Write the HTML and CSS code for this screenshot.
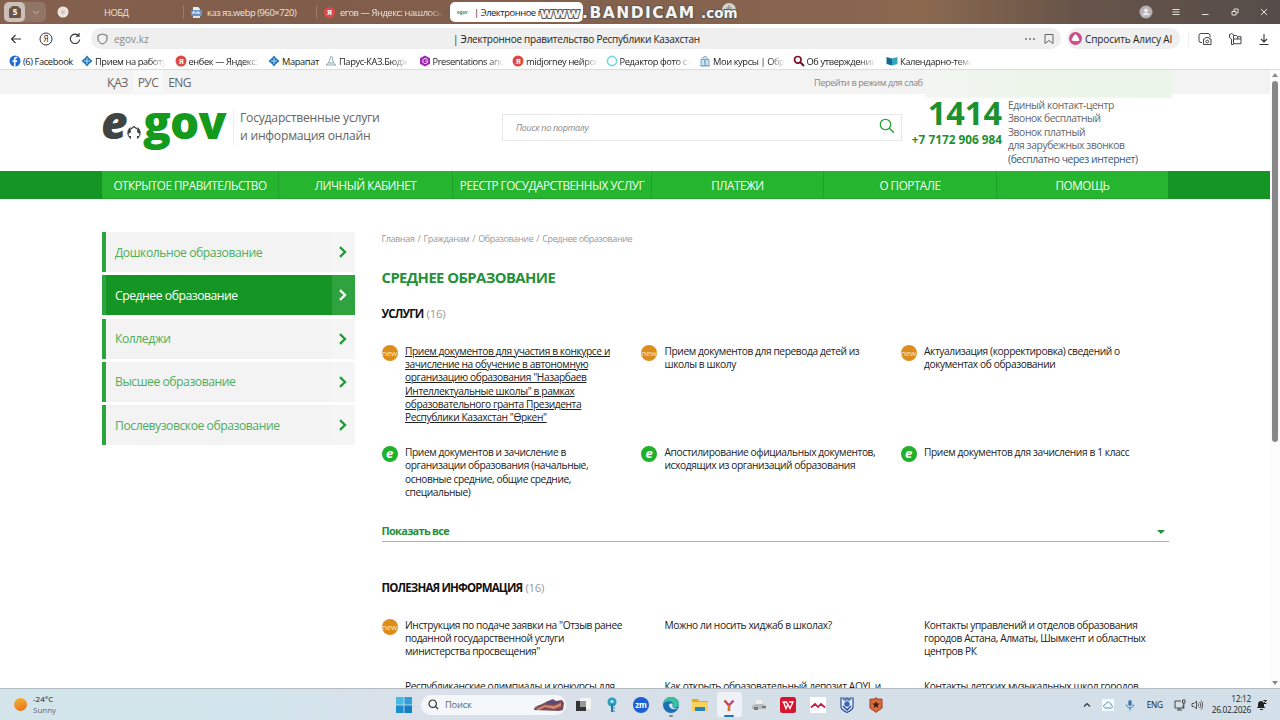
FILE: index.html
```
<!DOCTYPE html>
<html lang="ru">
<head>
  <meta charset="UTF-8" />
  <title>Электронное правительство Республики Казахстан</title>
  <link rel="stylesheet" href="styles.css">
</head>
<body>
  <div class="tabs">
    <div class="tab-group">
      <span class="tab-count"><svg width="12" height="12" viewBox="0 0 12 12"><path d="M3.500 0h5L12 3v7.500a1.500 1.500 0 0 1-1.500 1.500h-9A1.500 1.500 0 0 1 0 10.500V3z" fill="#6b5547"/><text x="6" y="9.300" text-anchor="middle" class="count-text">5</text></svg></span>
      <svg class="tab-chevron" width="8" height="5" viewBox="0 0 8 5"><path d="M1 1l3 2.500L7 1" fill="none" stroke="#c5b5ab"/></svg>
    </div>
    <div class="tab tab-nobd">
      <svg width="12" height="12" viewBox="0 0 12 12"><circle cx="6" cy="6" r="5.500" fill="#f4efe9"/><path d="M6 1.500v9M1.500 6h9M3 3l6 6M9 3L3 9" stroke="#a8917f" stroke-width=".8" stroke-dasharray="1 1"/></svg>
      <span class="tab-text">НОБД</span>
    </div>
    <div class="tab tab-webp">
      <svg width="11" height="11" viewBox="0 0 11 11"><path d="M2 0h5l2 2v2H2z" fill="#e8eef6"/><rect y="3" width="11" height="6" rx="1" fill="#6d93c8"/><path d="M2 7V5h2v1.500M6 7V5h2v2" stroke="#fff" fill="none"/><path d="M2 9h7v2H2z" fill="#dce6f2"/></svg>
      <span class="tab-text">каз яз.webp (960×720)</span>
    </div>
    <div class="tab tab-egov">
      <svg width="11" height="11" viewBox="0 0 11 11"><circle cx="5.500" cy="5.500" r="5.500" fill="#dc4a46"/><text x="5.500" y="8.300" text-anchor="middle" class="ya-text">Я</text></svg>
      <span class="tab-text fade">егов — Яндекс: нашлось 2</span>
    </div>
    <div class="tab tab-active">
      <span class="mini-logo">egov</span>
      <span class="tab-text">| Электронное п</span>
    </div>
    <div class="window-buttons">
      <svg width="14" height="14" viewBox="0 0 14 14"><circle cx="7" cy="7" r="6.500" fill="#b9b2b4"/><circle cx="7" cy="5.300" r="1.900" fill="#eeeaf0"/><path d="M3.500 10.200c0-3.500 7-3.500 7 0z" fill="#eeeaf0"/></svg>
      <svg width="14" height="14" viewBox="0 0 14 14"><path d="M3.500 4.500h7M3.500 7h7M3.500 9.500h7" stroke="#e5e1de" fill="none"/></svg>
      <svg width="14" height="14" viewBox="0 0 14 14"><path d="M4 9.500h6.500" stroke="#e5e1de"/></svg>
      <svg width="14" height="14" viewBox="0 0 14 14"><path d="M4 6.500h4v3.500H4zM6 6V4h4v4H8.500" stroke="#e5e1de" fill="none"/></svg>
      <svg width="14" height="14" viewBox="0 0 14 14"><path d="M4 4l6 6M10 4l-6 6" stroke="#e5e1de"/></svg>
    </div>
    <div class="watermark"><svg class="watermark-ball" width="16" height="16" viewBox="0 0 16 16"><circle cx="8" cy="8" r="7" fill="#d5d3d1"/><path d="M8 3v7M5 6h6" stroke="#888"/></svg><span class="wm-www">www</span><span class="wm-main">.BANDICAM</span><span class="wm-com">.com</span></div>
  </div>

  <div class="toolbar">
    <div class="toolbar-nav">
      <svg width="14" height="14" viewBox="0 0 14 14"><path d="M12 7H2.500M6.500 3L2.500 7l4 4" fill="none" stroke="#333" stroke-width="1.100"/></svg>
      <svg width="14" height="14" viewBox="0 0 14 14"><circle cx="7" cy="7" r="6" fill="none" stroke="#333"/><text x="7" y="10" text-anchor="middle" class="ya-outline">Я</text></svg>
      <svg width="14" height="14" viewBox="0 0 14 14"><path d="M10.800 4A4.700 4.700 0 1 0 11.700 7.500M11 1v3.300H7.800" fill="none" stroke="#333" stroke-width="1.100"/></svg>
    </div>
    <div class="address">
      <svg width="11" height="12" viewBox="0 0 11 12"><path d="M5.500 1L10 2.500V6c0 2.500-2 4.200-4.500 5C3 10.200 1 8.500 1 6V2.500z" fill="none" stroke="#666"/></svg>
      <span class="address-host">egov.kz</span>
      <span class="address-title">| Электронное правительство Республики Казахстан</span>
      <svg width="12" height="12" viewBox="0 0 12 12"><circle cx="2" cy="6" r=".9" fill="#666"/><circle cx="6" cy="6" r=".9" fill="#666"/><circle cx="10" cy="6" r=".9" fill="#666"/></svg>
      <svg class="bookmark-flag" width="10" height="12" viewBox="0 0 10 12"><path d="M1 1.500h8v9L5 7.500l-4 3z" fill="none" stroke="#666"/></svg>
    </div>
    <div class="alice">
      <svg width="13" height="13" viewBox="0 0 13 13"><circle cx="6.500" cy="6.500" r="6.500" fill="#cf4c8b"/><path d="M6.500 2.300c1 0 3.900 4.800 3.900 6s-7.800 1.200-7.800 0 2.900-6 3.900-6z" fill="#fff"/></svg>
      <span>Спросить Алису AI</span>
    </div>
    <div class="toolbar-tools">
      <svg width="14" height="14" viewBox="0 0 14 14"><path d="M4 10.500H3A2 2 0 0 1 1 8.500v-5a2 2 0 0 1 2-2h7a2 2 0 0 1 2 2v2M5.500 7h1l1-1.500h3L11.500 7h1.500v5.500H5.500z" fill="none" stroke="#444"/><circle cx="9.200" cy="9.500" r="1.400" fill="none" stroke="#444"/></svg>
      <svg width="14" height="14" viewBox="0 0 14 14"><path d="M3.500 12.500V7L1.500 5.500v-3l2-1 2 1M5.500 12.500h-2M5.500 7V3.500h3l1 1.200H13v7H5.500zM5.500 7H13M9.500 4.700V7" fill="none" stroke="#444"/></svg>
      <svg width="14" height="14" viewBox="0 0 14 14"><path d="M7 2v8M4 7l3 3 3-3M2.500 12.500h9" fill="none" stroke="#333" stroke-width="1.100"/></svg>
    </div>
  </div>

  <div class="bookmarks">
    <span class="bm"><svg class="bm-icon" viewBox="0 0 12 12"><circle cx="6" cy="6" r="5.500" fill="#1c6ad2"/><path d="M6.500 11.500V7H8l.3-1.700H6.500V4.200c0-.6.300-.9 1.800-.9V1.900C6 1.600 4.900 2.500 4.900 4v1.300H3.500V7h1.400v4.500z" fill="#fff"/></svg><span class="bm-text">(6) Facebook</span></span>
    <span class="bm bm-wide"><svg class="bm-icon" viewBox="0 0 12 12"><path d="M6 .5L8 3l3.500 3L8 9l-2 2.500L4 9 .5 6 4 3z" fill="#1c73b8"/><path d="M6 3v6M3 6h6" stroke="#bfe0f2"/></svg><span class="bm-text fade">Прием на работу</span></span>
    <span class="bm bm-wide"><svg class="bm-icon" viewBox="0 0 12 12"><circle cx="6" cy="6" r="5.500" fill="#dc4a46"/><text x="6" y="8.800" text-anchor="middle" class="ya-text">Я</text></svg><span class="bm-text fade">енбек — Яндекс: н</span></span>
    <span class="bm bm-mid"><svg class="bm-icon" viewBox="0 0 12 12"><path d="M6 .5L8 3l3.500 3L8 9l-2 2.500L4 9 .5 6 4 3z" fill="#1c73b8"/><path d="M6 3v6M3 6h6" stroke="#bfe0f2"/></svg><span class="bm-text">Марапат</span></span>
    <span class="bm bm-wide"><svg class="bm-icon" viewBox="0 0 12 12"><path d="M6 1L3.500 8h5L7 1.500M1 10h10M3.500 8L1 10M8.500 8l2.500 2" fill="none" stroke="#8aa9b8"/></svg><span class="bm-text fade">Парус-КАЗ.Бюдж</span></span>
    <span class="bm bm-wide"><svg class="bm-icon" viewBox="0 0 12 12"><path d="M6 .5l5 2.800v5.500L6 11.500 1 8.800V3.300z" fill="#a127b5"/><path d="M8.500 4.500c-2-2-5-.5-4.700 2 .5 2.500 3.500 2.500 4.700.8V6H6.500" fill="none" stroke="#fff"/></svg><span class="bm-text fade">Presentations and</span></span>
    <span class="bm bm-wide"><svg class="bm-icon" viewBox="0 0 12 12"><circle cx="6" cy="6" r="5.500" fill="#dc4a46"/><text x="6" y="8.800" text-anchor="middle" class="ya-text">Я</text></svg><span class="bm-text fade">midjorney нейрос</span></span>
    <span class="bm bm-wide"><svg class="bm-icon" viewBox="0 0 12 12"><circle cx="6" cy="6" r="4.600" fill="none" stroke="#6edbe2" stroke-width="1.600"/></svg><span class="bm-text fade">Редактор фото с п</span></span>
    <span class="bm bm-wide"><svg class="bm-icon" viewBox="0 0 12 12"><path d="M2.500 4L6 1l3.500 3M2 4.500h8v6H2zM1 11h10" fill="#cfe3ef" stroke="#7aa9c6"/><path d="M6 5v5" stroke="#4c88b0"/></svg><span class="bm-text fade">Мои курсы | Обра</span></span>
    <span class="bm bm-wide"><svg class="bm-icon" viewBox="0 0 12 12"><circle cx="4.800" cy="4.800" r="3.300" fill="none" stroke="#7a1020" stroke-width="1.700"/><path d="M7.300 7.300l3.700 3.700" stroke="#7a1020" stroke-width="2"/></svg><span class="bm-text fade">Об утверждении</span></span>
    <span class="bm bm-wide"><svg class="bm-icon" viewBox="0 0 12 12"><path d="M.5 2L6 3.500v7L.5 9z" fill="#176b93"/><path d="M11.500 2L6 3.500v7L11.500 9z" fill="#36a6c0"/></svg><span class="bm-text fade">Календарно-тема</span></span>
  </div>

  <div class="viewport">
    <div class="page">
      <div class="top-bar">
        <div class="langs"><a>ҚАЗ</a><a class="lang-active">РУС</a><a>ENG</a></div>
        <span class="blind-mode">Перейти в режим для слаб</span>
      </div>

      <div class="header">
        <div class="logo">
          <span class="logo-e">e</span>
          <svg class="logo-dot" width="16" height="16" viewBox="0 0 16 16"><path d="M4.500 2A7 7 0 0 0 5 14V11H2.800V8.500L5 7.300zM11.500 2a7 7 0 0 1-.5 12V11h2.200V8.500L11 7.300z" fill="#3f4543"/><path d="M5 4l3-2.500L11 4" fill="none" stroke="#3f4543" stroke-width="1.300"/></svg>
          <span class="logo-gov">gov</span>
        </div>
        <div class="slogan">Государственные услуги<br>и информация онлайн</div>
        <div class="search">
          <span>Поиск по порталу</span>
          <svg width="16" height="16" viewBox="0 0 16 16"><circle cx="6.500" cy="6.500" r="5.200" fill="none" stroke="#2ca33c" stroke-width="1.300"/><path d="M10.300 10.300l4.700 4.500" stroke="#2ca33c" stroke-width="1.500"/></svg>
        </div>
        <div class="phones">
          <div class="phone-short">1414</div>
          <div class="phone-long">+7 7172 906 984</div>
        </div>
        <div class="phone-notes">Единый контакт-центр<br>Звонок бесплатный<br>Звонок платный<br>для зарубежных звонков<br><a>(бесплатно через интернет)</a></div>
      </div>

      <div class="nav">
        <div class="nav-inner">
          <a>ОТКРЫТОЕ ПРАВИТЕЛЬСТВО</a>
          <a>ЛИЧНЫЙ КАБИНЕТ</a>
          <a>РЕЕСТР ГОСУДАРСТВЕННЫХ УСЛУГ</a>
          <a>ПЛАТЕЖИ</a>
          <a>О ПОРТАЛЕ</a>
          <a>ПОМОЩЬ</a>
        </div>
      </div>

      <div class="content">
        <div class="sidebar">
          <a class="side-item"><span>Дошкольное образование</span><i><svg width="9" height="12" viewBox="0 0 9 12"><path d="M2 1.200L7 6l-5 4.800" /></svg></i></a>
          <a class="side-item side-active"><span>Среднее образование</span><i><svg width="9" height="12" viewBox="0 0 9 12"><path d="M2 1.200L7 6l-5 4.800" /></svg></i></a>
          <a class="side-item"><span>Колледжи</span><i><svg width="9" height="12" viewBox="0 0 9 12"><path d="M2 1.200L7 6l-5 4.800" /></svg></i></a>
          <a class="side-item"><span>Высшее образование</span><i><svg width="9" height="12" viewBox="0 0 9 12"><path d="M2 1.200L7 6l-5 4.800" /></svg></i></a>
          <a class="side-item"><span>Послевузовское образование</span><i><svg width="9" height="12" viewBox="0 0 9 12"><path d="M2 1.200L7 6l-5 4.800" /></svg></i></a>
        </div>

        <div class="main">
          <div class="crumbs">Главная<b>/</b>Гражданам<b>/</b>Образование<b>/</b>Среднее образование</div>
          <h1>СРЕДНЕЕ ОБРАЗОВАНИЕ</h1>
          <h2>УСЛУГИ <span>(16)</span></h2>
          <div class="services">
            <div class="service"><span class="badge-new">new</span><a class="hovered">Прием документов для участия в конкурсе и<br>зачисление на обучение в автономную<br>организацию образования "Назарбаев<br>Интеллектуальные школы" в рамках<br>образовательного гранта Президента<br>Республики Казахстан "Өркен"</a></div>
            <div class="service"><span class="badge-new">new</span><a>Прием документов для перевода детей из<br>школы в школу</a></div>
            <div class="service"><span class="badge-new">new</span><a>Актуализация (корректировка) сведений о<br>документах об образовании</a></div>
            <div class="service"><span class="badge-e">e</span><a>Прием документов и зачисление в<br>организации образования (начальные,<br>основные средние, общие средние,<br>специальные)</a></div>
            <div class="service"><span class="badge-e">e</span><a>Апостилирование официальных документов,<br>исходящих из организаций образования</a></div>
            <div class="service"><span class="badge-e">e</span><a>Прием документов для зачисления в 1 класс</a></div>
          </div>
          <div class="show-all"><span>Показать все</span><i></i></div>
          <h2>ПОЛЕЗНАЯ ИНФОРМАЦИЯ <span>(16)</span></h2>
          <div class="services">
            <div class="service"><span class="badge-new">new</span><a>Инструкция по подаче заявки на "Отзыв ранее<br>поданной государственной услуги<br>министерства просвещения"</a></div>
            <div class="service"><a>Можно ли носить хиджаб в школах?</a></div>
            <div class="service"><a>Контакты управлений и отделов образования<br>городов Астана, Алматы, Шымкент и областных<br>центров РК</a></div>
            <div class="service"><a>Республиканские олимпиады и конкурсы для</a></div>
            <div class="service"><a>Как открыть образовательный депозит AQYL и</a></div>
            <div class="service"><a>Контакты детских музыкальных школ городов</a></div>
          </div>
        </div>
      </div>
    </div>
    <div class="scrollbar"><i class="arrow-up"></i><i class="thumb"></i><i class="arrow-down"></i></div>
    <div class="smudge"></div>
  </div>

  <div class="taskbar">
    <div class="weather">
      <i class="sun"></i>
      <div><div class="temp">-24°C</div><div class="sky">Sunny</div></div>
    </div>
    <svg class="start" width="16" height="16" viewBox="0 0 16 16"><path d="M0 0h7.600v7.600H0z" fill="#48b8e4"/><path d="M8.400 0H16v7.600H8.400z" fill="#2f9fd9"/><path d="M0 8.400h7.600V16H0z" fill="#1e8dce"/><path d="M8.400 8.400H16V16H8.400z" fill="#147dc4"/></svg>
    <div class="task-search">
      <svg width="11" height="11" viewBox="0 0 11 11"><circle cx="4.700" cy="4.700" r="3.700" fill="none" stroke="#333" stroke-width="1.200"/><path d="M7.500 7.500L10 10" stroke="#333" stroke-width="1.200"/></svg>
      <span>Поиск</span>
      <svg width="32" height="14" viewBox="0 0 32 14"><path d="M1 12c0-3 3-4 8-6l6-3 5-2 3 2 6-1 2 3-1 7-4 1z" fill="#7c4a5c"/><path d="M3 11l9-4 9 1 7-3v3l-7 3-9-2-6 3z" fill="#d58a68"/><path d="M14 4l7 1 6-2" fill="none" stroke="#384a8a"/></svg>
    </div>
    <div class="task-icons">
      <span><svg viewBox="0 0 16 16"><path d="M5 1h11v11H5z" fill="#f4f4f4"/><path d="M1 4h4v6h6v4H1z" fill="#333"/><path d="M5 4h6v6H5z" fill="#999"/></svg></span>
      <span><svg viewBox="0 0 16 16"><circle cx="8" cy="5" r="4.500" fill="#2a9dc2"/><path d="M8 7v8" stroke="#1f7fa9" stroke-width="2"/><circle cx="8" cy="4.500" r="1.700" fill="#a5e1ec"/><path d="M8 11h3M8 14h3" stroke="#1f7fa9"/></svg></span>
      <span><svg viewBox="0 0 16 16"><circle cx="8" cy="8" r="8" fill="#1b5fd6"/><text x="8" y="10.600" text-anchor="middle" class="zm-text">zm</text></svg></span>
      <span class="running"><svg viewBox="0 0 16 16"><circle cx="8" cy="8" r="8" fill="#1a6fb5"/><path d="M.3 7C1 2.500 4.500 0 8 0c5 0 8 3.200 8 6.500 0 3-2 4.200-4 4.200-1.700 0-2.700-.7-2.700-1.500 0-.6.600-.9.600-2C9.900 5.400 8 4.300 6 4.300 3.500 4.300 1.300 5.300.3 7z" fill="#3cc0a0"/><path d="M6 8c.5 3.500 3 4.500 6 4.300 1.500-.1 2.500-.6 3.300-1.300-1.500 1-5.500.8-6-1.800.4-1.500.6-2.200-.6-2.700C7.200 6.100 6 6.800 6 8z" fill="#dce9f0"/></svg></span>
      <span><svg viewBox="0 0 16 16"><path d="M0 2h6l1.500 2H16v10H0z" fill="#e2aa2b"/><path d="M0 5h16v9H0z" fill="#f8d15d"/><path d="M3 10h10v4H3z" fill="#2683bd"/></svg></span>
      <span class="task-active"><svg viewBox="0 0 16 16"><path d="M3.500 3.500L8 8.500V14" fill="none" stroke="#d8382f" stroke-width="2.200"/><path d="M12.500 3.500L8 8.500V14" fill="none" stroke="#b5457d" stroke-width="2.200"/><path d="M8 8.500V14" stroke="#e5702c" stroke-width="2.200"/></svg></span>
      <span><svg viewBox="0 0 16 16"><path d="M5 3h6v5H5z" fill="#eee"/><path d="M1 9l3-2h8l3 2v3H1z" fill="#b8babb"/><path d="M3 10h4v3H3zM11 9h4v2h-4z" fill="#76797b"/></svg></span>
      <span><svg viewBox="0 0 16 16"><rect width="16" height="16" rx="2.500" fill="#d6152f"/><path d="M2.500 5h4L8.500 9M3.500 5L6 11.500l2-4 2 4L13 5H9" fill="none" stroke="#fff" stroke-width="1.400"/></svg></span>
      <span><svg viewBox="0 0 16 16"><path d="M0 0h16v16H0z" fill="#fff"/><path d="M1 10.500L5 7l3 3 3-3 4 3.500" fill="none" stroke="#c21d4d" stroke-width="1.700"/></svg></span>
      <span><svg viewBox="0 0 16 16"><path d="M2 1h3v2h2V1h2v2h2V1h3v9c0 2.500-3 4-6 5.500C5 14 2 12.500 2 10z" fill="#e5edfa" stroke="#294e9c" stroke-width="1.200"/><circle cx="8" cy="7" r="2.700" fill="#3b66b3"/><path d="M4 9l4 4 4-4" fill="none" stroke="#294e9c" stroke-width="1.500"/></svg></span>
      <span><svg viewBox="0 0 16 16"><path d="M8 .8l2 1.400h4V11l-6 4.300L2 11V2.200h4z" fill="#df6d35" stroke="#8c3928"/><path d="M8 4l1 2.600h2.800l-2.200 1.700.8 2.700L8 9.400 5.600 11l.8-2.700-2.200-1.700H7z" fill="#3b1c1c"/></svg></span>
    </div>
    <div class="tray">
      <svg width="8" height="6" viewBox="0 0 8 6"><path d="M1 4.500l3-3 3 3" fill="none" stroke="#333" stroke-width="1.200"/></svg>
      <svg class="cloud" width="12" height="12" viewBox="0 0 12 12"><path d="M0 0h12v12H0z" fill="#f5fafc"/><path d="M3.500 9h5.700c2-.4 1.600-2.700 0-2.800C9 2.500 4.500 2.300 3.700 5.300 1 5.400 1 8.800 3.500 9z" fill="none" stroke="#5593b5"/></svg>
      <svg class="mic" width="10" height="12" viewBox="0 0 10 12"><rect x="3.300" y="1" width="3.400" height="6" rx="1.700" fill="#3d78b2"/><path d="M1.500 5.500c0 4.500 7 4.500 7 0M5 9v2.500" fill="none" stroke="#3d78b2"/></svg>
      <span class="tray-lang">ENG</span>
      <svg class="net" width="12" height="12" viewBox="0 0 12 12"><path d="M7 2H1v7h8V6M3 11h5M5 9v2M8.500 1H11v3H8.500zM9.800 4v6" fill="none" stroke="#444"/></svg>
      <svg class="vol" width="12" height="12" viewBox="0 0 12 12"><path d="M1 4.500h2L5.500 2v8L3 7.500H1zM7 4.500c.8 1 .8 2 0 3M8.500 3c1.700 2 1.700 4 0 6M10 1.500c2.300 3 2.300 6 0 9" fill="none" stroke="#444" stroke-width=".9"/></svg>
      <div class="clock">12:12<br>26.02.2026</div>
      <svg class="bell" width="12" height="12" viewBox="0 0 12 12"><path d="M1 9l1-1.500V5c0-4 6-4 6 0v2.500L9.500 9zM4 10h3v1H4z" fill="#222"/><path d="M7.500 1.500h3l-3 3h3" fill="none" stroke="#222"/></svg>
    </div>
  </div>
</body>
</html>
```
FILE: styles.css
```
* {
  box-sizing: border-box;
}
body {
  margin: 0;
  width: 1280px;
  height: 720px;
  overflow: hidden;
  display: flex;
  flex-direction: column;
  font-family: "Open Sans", "Noto Sans", sans-serif;
  background: #fff;
  color: #222;
}
svg {
  display: block;
  flex: none;
}
h1, h2 {
  margin: 0;
}

/* tab strip */
.tabs {
  position: relative;
  display: flex;
  align-items: center;
  height: 24px;
  flex: none;
  padding: 0 9px 0 4px;
  background: linear-gradient(90deg, #84614f 0, #805d4b 25%, #87654f 66%, #8b694f 72%, #675449 84%, #554d4a 100%);
  color: #eee3dc;
  font-size: 9.4px;
  white-space: nowrap;
}
.tab-group {
  display: flex;
  align-items: center;
  width: 42px;
  height: 20px;
  border-radius: 5px;
  background: #917567;
}
.tab-count {
  display: flex;
  justify-content: center;
  align-items: center;
  width: 21px;
  height: 20px;
  border-radius: 5px;
  background: #cbbfb6;
}
.count-text {
  font: bold 8px "Noto Sans", sans-serif;
  fill: #fff;
}
.tab-chevron {
  margin-left: 7px;
}
.tab {
  display: flex;
  align-items: center;
  height: 14px;
}
.tab-text {
  letter-spacing: -0.45px;
}
.tab-nobd {
  width: 138px;
  padding-left: 11px;
  gap: 35px;
  border-right: 1px solid #9b7d6c;
}
.tab-webp {
  width: 133px;
  padding-left: 7px;
  gap: 5px;
  border-right: 1px solid #9b7d6c;
}
.tab-egov {
  width: 133px;
  padding: 0 6px 0 7px;
  gap: 5px;
}
.fade {
  overflow: hidden;
  -webkit-mask-image: linear-gradient(90deg, #000 calc(100% - 16px), transparent);
  mask-image: linear-gradient(90deg, #000 calc(100% - 16px), transparent);
}
.tab-active {
  width: 133px;
  height: 20px;
  padding-left: 7px;
  gap: 6px;
  border-radius: 5px;
  background: #fff;
  color: #222;
}
.mini-logo {
  width: 11px;
  font-size: 4.5px;
  font-weight: bold;
  color: #3f8b62;
}
.ya-text {
  font: bold 7.5px "Noto Sans", sans-serif;
  fill: #fff;
}
.window-buttons {
  display: flex;
  gap: 15.4px;
  margin-left: auto;
}
.watermark {
  position: absolute;
  left: 540px;
  top: 1px;
  display: flex;
  align-items: center;
  height: 24px;
  font-family: "DejaVu Sans", sans-serif;
  font-weight: bold;
  color: #f7f5f3;
  -webkit-text-stroke: 2px #5d5551;
  paint-order: stroke fill;
}
.wm-www {
  width: 42px;
  font-size: 14.5px;
}
.wm-main {
  width: 119px;
  font-size: 15.5px;
  letter-spacing: 1.5px;
}
.wm-com {
  position: relative;
  font-size: 13.5px;
}
.watermark-ball {
  position: absolute;
  right: 0;
  top: 1px;
}

/* address row */
.toolbar {
  display: flex;
  align-items: center;
  height: 29px;
  flex: none;
  padding: 0 9px;
  background: #fff;
}
.toolbar-nav {
  display: flex;
  gap: 15.5px;
  width: 82px;
}
.ya-outline {
  font: 8px "Noto Sans", sans-serif;
  fill: #333;
}
.address {
  display: flex;
  align-items: center;
  width: 970px;
  height: 21px;
  padding: 0 6px;
  border-radius: 10px;
  background: #efefef;
  font-size: 10px;
}
.address-host {
  width: 334px;
  margin-left: 6px;
  color: #888;
}
.address-title {
  flex: 1;
  margin-left: 5px;
  letter-spacing: -0.25px;
}
.bookmark-flag {
  margin: 0 1px 0 8px;
}
.alice {
  display: flex;
  align-items: center;
  gap: 3px;
  width: 113px;
  height: 21px;
  margin-left: 6px;
  padding-left: 2px;
  border-radius: 10px;
  background: #efefef;
  font-size: 10px;
  letter-spacing: -0.1px;
  white-space: nowrap;
}
.toolbar-tools {
  display: flex;
  gap: 15.5px;
  margin-left: auto;
  padding-left: 9px;
  border-left: 1px solid #eee;
}

/* bookmarks */
.bookmarks {
  display: flex;
  align-items: center;
  height: 17px;
  flex: none;
  padding-left: 9px;
  border-bottom: 1px solid #ddd;
  font-size: 9.3px;
  letter-spacing: -0.4px;
  white-space: nowrap;
}
.bm {
  display: flex;
  align-items: center;
  gap: 2px;
  width: 72px;
}
.bm-wide {
  width: 93.5px;
  padding-right: 8px;
}
.bm-mid {
  width: 57px;
}
.bm-icon {
  width: 12px;
  height: 12px;
}

/* web page */
.viewport {
  position: relative;
  display: flex;
  flex: 1;
  min-height: 0;
  overflow: hidden;
}
.page {
  width: 1270px;
}
.smudge {
  position: absolute;
  left: 925px;
  top: -5px;
  width: 247px;
  height: 33px;
  background: linear-gradient(90deg, #f3f5f2 0, #eef5ec 30%, #ebf5e9 100%);
  filter: blur(1px);
}
.top-bar {
  display: flex;
  align-items: center;
  height: 24px;
  padding-left: 102px;
  background: #f3f3f3;
}
.langs {
  display: flex;
  width: 712px;
  font-size: 12px;
  letter-spacing: -0.6px;
  color: #666;
}
.langs a {
  padding: 4px 5px;
}
.langs .lang-active {
  background: #f8f8f8;
}
.blind-mode {
  white-space: nowrap;
  font-size: 9.2px;
  letter-spacing: -0.45px;
  color: #888;
}
.header {
  display: flex;
  height: 77px;
  padding-left: 102px;
}
.logo {
  display: flex;
  width: 131px;
  height: 60px;
  font-weight: 800;
  line-height: 54px;
}
.logo-e {
  width: 25px;
  margin-left: -1px;
  font-size: 46px;
  font-style: italic;
  color: #3f4543;
}
.logo-dot {
  margin: 31px 1px 0 0;
}
.logo-gov {
  font-size: 46px;
  letter-spacing: -0.8px;
  color: #149a1c;
}
.slogan {
  width: 269px;
  height: 36px;
  margin-top: 15px;
  padding-left: 6px;
  border-left: 1px solid #eee;
  font-size: 12.2px;
  line-height: 17.5px;
  letter-spacing: -0.25px;
  color: #666;
}
.search {
  display: flex;
  align-items: center;
  justify-content: space-between;
  width: 400px;
  height: 27px;
  margin-top: 20px;
  padding: 0 6px 0 13px;
  border: 1px solid #e8e8e8;
  font-size: 9px;
  font-style: italic;
  letter-spacing: -0.3px;
  color: #888;
}
.search svg {
  margin-top: -4px;
}
.phones {
  width: 100px;
  text-align: right;
  white-space: nowrap;
  font-weight: bold;
  color: #1c9130;
}
.phone-short {
  height: 37px;
  font-size: 32.5px;
  line-height: 37px;
}
.phone-long {
  font-size: 11.8px;
  line-height: 17px;
}
.phone-notes {
  margin: 5px 0 0 6px;
  font-size: 10.3px;
  line-height: 13.4px;
  letter-spacing: -0.4px;
  color: #666;
  white-space: nowrap;
}
.phone-notes a {
  color: #315a78;
}
.nav {
  height: 28px;
  padding-left: 102px;
  background: #159624;
}
.nav-inner {
  display: grid;
  grid-template-columns: 177px 174px 199px 172px 173px 171px;
  width: 1066px;
  height: 28px;
  background: #25b52f;
  border-bottom: 1px solid #1fa32c;
}
.nav a {
  border-right: 1px solid #1ea32b;
  text-align: center;
  line-height: 28px;
  font-size: 11.7px;
  letter-spacing: -0.45px;
  white-space: nowrap;
  color: #f4fff4;
}
.nav a:last-child {
  border: 0;
}
.content {
  display: flex;
  padding: 33px 0 0 102px;
}
.sidebar {
  display: flex;
  flex-direction: column;
  gap: 3.3px;
  width: 253px;
  margin-right: 26.5px;
}
.side-item {
  display: flex;
  justify-content: space-between;
  align-items: center;
  height: 40px;
  border-left: 4px solid #2ba53e;
  padding-left: 9px;
  background: #f3f3f3;
  color: #4fae5b;
  font-size: 12.2px;
  letter-spacing: -0.47px;
}
.side-item i {
  display: flex;
  align-items: center;
  width: 23px;
  height: 40px;
  padding-left: 6px;
  background: #f5f5f5;
}
.side-item path {
  fill: none;
  stroke: #1f9a35;
  stroke-width: 2.3;
}
.side-active {
  background: #159624;
  color: #fff;
}
.side-active i {
  background: #2fa33d;
}
.side-active path {
  stroke: #fff;
}
.main {
  width: 787px;
  white-space: nowrap;
}
.crumbs {
  height: 13px;
  font-size: 9px;
  line-height: 13px;
  letter-spacing: -0.38px;
  color: #999;
}
.crumbs b {
  margin: 0 3px;
  font-weight: normal;
}
h1 {
  margin-top: 22px;
  font-size: 14.8px;
  line-height: 20px;
  letter-spacing: -0.55px;
  color: #249038;
}
h2 {
  margin-top: 19px;
  font-size: 11.5px;
  line-height: 16px;
  letter-spacing: -0.85px;
  color: #111;
}
h2 span {
  margin-left: 1px;
  font-weight: normal;
  letter-spacing: -0.3px;
  color: #999;
}
.services {
  display: grid;
  grid-template-columns: 259.5px 259.5px 259.5px;
  row-gap: 21.3px;
  margin-top: 22.5px;
  font-size: 10.2px;
  line-height: 13.35px;
  letter-spacing: -0.4px;
}
.service {
  position: relative;
  padding-left: 23.5px;
}
.hovered {
  text-decoration: underline;
}
.badge-new, .badge-e {
  position: absolute;
  left: 0;
  top: 0;
  width: 16px;
  height: 16px;
  border-radius: 50%;
  text-align: center;
  color: #fff;
}
.badge-new {
  background: #dc8d1c;
  font-size: 8px;
  line-height: 15px;
  letter-spacing: -0.2px;
  color: #fbe6c4;
}
.badge-e {
  background: #1fb129;
  font-size: 13px;
  font-weight: bold;
  font-style: italic;
  line-height: 14px;
}
.show-all {
  display: flex;
  justify-content: space-between;
  align-items: center;
  height: 22px;
  margin-top: 21px;
  margin-bottom: 38px;
  padding-right: 4px;
  border-bottom: 1px solid #8cc4a8;
  font-size: 11px;
  font-weight: bold;
  letter-spacing: -0.7px;
  color: #249038;
}
.show-all i {
  margin-top: 2px;
  border: 4px solid transparent;
  border-top: 4px solid #249038;
  border-bottom: 0;
}
.scrollbar {
  display: flex;
  flex-direction: column;
  align-items: center;
  width: 10px;
  padding: 3px 0;
  background: #fcfcfc;
}
.arrow-up, .arrow-down {
  border: 3px solid transparent;
}
.arrow-up {
  border-bottom: 4px solid #888;
  border-top: 0;
}
.arrow-down {
  margin-top: auto;
  border-top: 4px solid #888;
  border-bottom: 0;
}
.thumb {
  width: 6px;
  height: 361px;
  margin-top: 4px;
  border-radius: 3px;
  background: #888;
}

/* taskbar */
.taskbar {
  display: flex;
  align-items: center;
  height: 32px;
  flex: none;
  border-top: 1px solid #b4bcc2;
  background: linear-gradient(90deg, #d3e5eb 0, #d2e5ec 20%, #dbe0ea 33%, #d5dfe7 60%, #d3e0e9 100%);
  white-space: nowrap;
}
.weather {
  display: flex;
  align-items: center;
  gap: 6px;
  width: 396px;
  padding-left: 14px;
  font-size: 8px;
  line-height: 10.5px;
}
.sun {
  width: 13px;
  height: 13px;
  border-radius: 50%;
  background: linear-gradient(160deg, #f4b436, #e56f1c);
}
.sky {
  color: #667;
}
.task-search {
  display: flex;
  align-items: center;
  gap: 6px;
  width: 145px;
  height: 20px;
  margin-left: 9px;
  padding: 0 1px 0 7px;
  border-radius: 10px;
  background: #f3f7fa;
  font-size: 9.3px;
  letter-spacing: -0.2px;
  color: #666;
}
.task-search span {
  flex: 1;
}
.task-icons {
  display: flex;
  gap: 4.4px;
  margin-left: 4px;
}
.task-icons span {
  display: flex;
  align-items: center;
  justify-content: center;
  width: 25px;
  height: 25px;
  border-radius: 3px;
}
.task-icons svg {
  width: 16px;
  height: 16px;
}
.task-icons .task-active, .task-icons .running {
  position: relative;
}
.task-icons .task-active {
  background: #eef1f5;
}
.task-active::after, .running::after {
  content: "";
  position: absolute;
  bottom: 0;
  width: 10px;
  height: 2px;
  border-radius: 1px;
  background: #1e78be;
}
.running::after {
  width: 4px;
  background: #888;
}
.zm-text {
  font: bold 8px "Noto Sans", sans-serif;
  fill: #fff;
}
.tray {
  display: flex;
  align-items: center;
  margin-left: auto;
  padding-right: 12px;
  font-size: 8.3px;
  letter-spacing: -0.3px;
}
.cloud {
  margin-left: 11px;
}
.mic {
  margin-left: 11px;
}
.tray-lang {
  margin-left: 12px;
}
.net {
  margin-left: 11px;
}
.vol {
  margin-left: 5px;
}
.clock {
  margin-left: 9px;
  text-align: right;
  line-height: 10.5px;
}
.bell {
  margin-left: 5px;
}
```
